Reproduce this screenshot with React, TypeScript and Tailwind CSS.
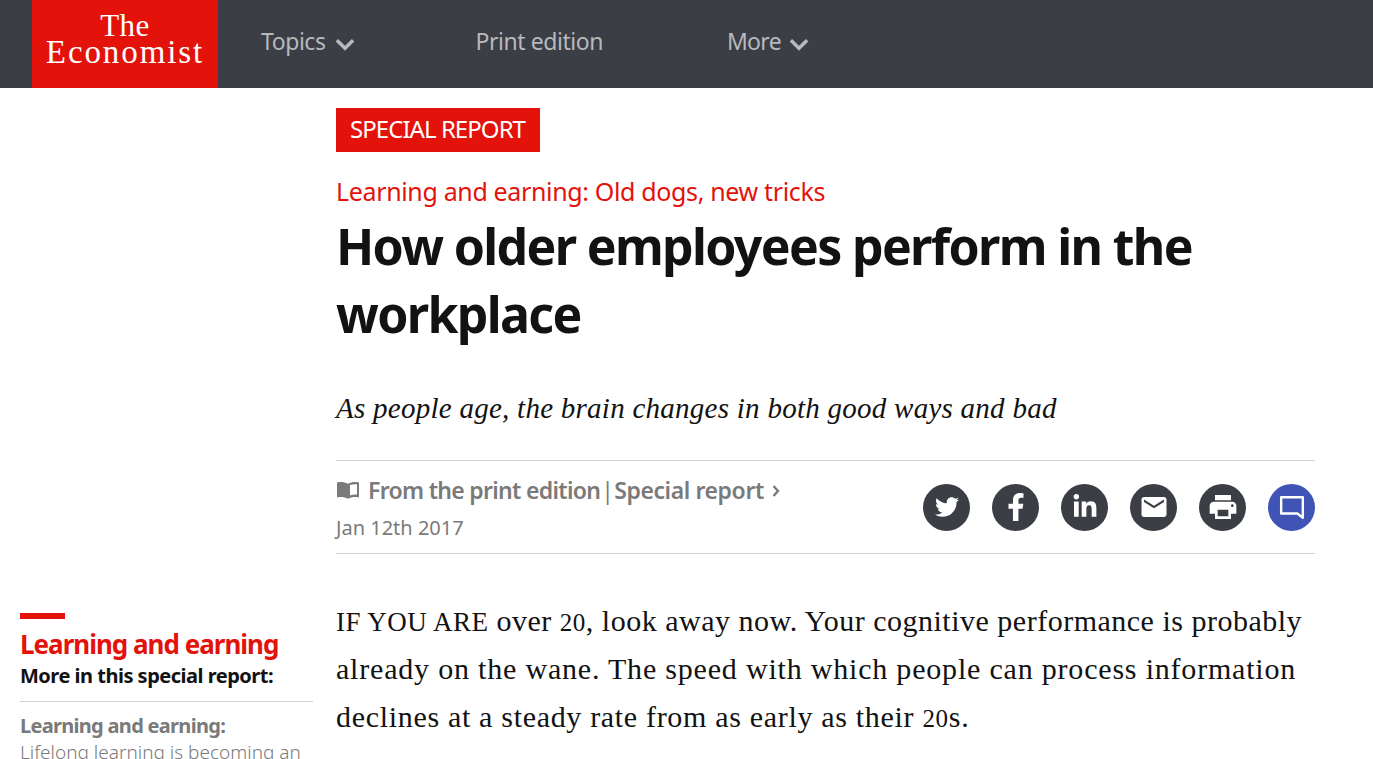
import { FaTwitter, FaFacebookF, FaLinkedinIn } from "react-icons/fa";
import { MdEmail, MdPrint } from "react-icons/md";

const sans = "font-['Noto_Sans',sans-serif]";

function Chevron({ className }: { className: string }) {
  return (
    <svg viewBox="0 0 18 12" className={className} fill="none" stroke="currentColor" strokeWidth="3.200">
      <path d="M1.500 2l7.500 7.500L16.500 2" />
    </svg>
  );
}

function ShareButton({ children, blue }: { children: React.ReactNode; blue?: boolean }) {
  return (
    <div
      className={
        blue
          ? "flex h-[47px] w-[47px] items-center justify-center rounded-full bg-[#3f54b4] text-white"
          : "flex h-[47px] w-[47px] items-center justify-center rounded-full bg-[#3b3e44] text-white"
      }
    >
      {children}
    </div>
  );
}

export default function App() {
  return (
    <div className="h-[759px] overflow-hidden bg-white">
      <header className={`flex h-[88px] bg-[#3b3e44] pl-[32px] text-[#b6b9bd] ${sans}`}>
        <div className="flex h-[88px] w-[186px] flex-col items-center bg-[#e3120b] pt-[12px] font-['Liberation_Serif',serif] text-white">
          <div className="text-[31px] leading-[27px] tracking-[0.5px]">The</div>
          <div className="text-[33px] leading-[27px] tracking-[1.9px]">Economist</div>
        </div>
        <nav className="flex items-center pb-[5px] text-[23px] tracking-[-0.45px]">
          <span className="ml-[43px]">Topics</span>
          <Chevron className="ml-[9px] mt-[5px] h-[13px] w-[20px]" />
          <span className="ml-[121px]">Print edition</span>
          <span className="ml-[124px] tracking-[-0.7px]">More</span>
          <Chevron className="ml-[8px] mt-[5px] h-[13px] w-[20px]" />
        </nav>
      </header>

      <main className="flex pl-[20px]">
        <aside className={`mt-[525px] w-[293px] shrink-0 ${sans}`}>
          <div className="h-[6px] w-[45px] bg-[#e3120b]" />
          <h2 className="mt-[6px] text-[26px] leading-[38px] font-bold tracking-[-1px] text-[#e3120b]">
            Learning and earning
          </h2>
          <p className="mt-[1px] text-[20px] leading-[23px] font-bold tracking-[-0.5px] text-[#121212]">
            More in this special report:
          </p>
          <div className="mt-[14px] border-t border-[#d0d0d0] pt-[11px]">
            <p className="text-[20px] leading-[26px] font-bold tracking-[-0.7px] text-[#7a7a7a]">
              Learning and earning:
            </p>
            <p className="text-[19px] leading-[26px] font-light tracking-[0px] text-[#7a7a7a]">
              Lifelong learning is becoming an
            </p>
          </div>
        </aside>

        <article className="ml-[23px] w-[979px] pt-[20px]">
          <div className={`inline-block h-[44px] bg-[#e3120b] pl-[14px] pr-[15px] text-[24px] leading-[42px] tracking-[-0.95px] text-white ${sans}`}>
            SPECIAL REPORT
          </div>
          <p className={`mt-[19px] text-[25px] leading-[40px] tracking-[-0.35px] text-[#e3120b] ${sans}`}>
            Learning and earning: Old dogs, new tricks
          </p>
          <h1 className={`mt-[1px] w-[900px] text-[50px] leading-[68px] font-bold tracking-[-1.65px] text-[#121212] ${sans}`}>
            How older employees perform in the workplace
          </h1>
          <p className="mt-[40px] font-['Liberation_Serif',serif] text-[29px] leading-[40px] tracking-[0.26px] text-[#121212] italic">
            As people age, the brain changes in both good ways and bad
          </p>

          <div className="mt-[32px] flex h-[94px] items-center justify-between border-y border-[#d0d0d0]">
            <div className={`pt-[1px] text-[#7a7a7a] ${sans}`}>
              <div className="flex items-center text-[23px] leading-[32px] font-semibold tracking-[-0.7px]">
                <svg viewBox="0 0 24 18" className="mr-[8px] h-[18px] w-[24px]" fill="currentColor">
                  <path d="M1 1.500c4-.8 7.500-.5 11 1.200v15c-3.500-1.700-7-2-11-1.200z" />
                  <path fillRule="evenodd" d="M12 2.700c3.500-1.700 7-2 11-1.200v15c-4-.8-7.500-.5-11 1.200zM14 4v10.500c2.500-.9 4.500-1.100 7-.9V3.300c-2.500-.2-4.500 0-7 .7z" />
                </svg>
                <span>From the print edition</span>
                <span className="mx-[1px] font-normal">|</span>
                <span className="tracking-[-0.4px]">Special report</span>
                <svg viewBox="0 0 8 12" className="ml-[8px] mt-[2px] h-[12px] w-[8px]" fill="none" stroke="currentColor" strokeWidth="2.400">
                  <path d="M1.500 1l4.500 5-4.500 5" />
                </svg>
              </div>
              <p className="mt-[8px] text-[20px] leading-[28px] tracking-[0px]">Jan 12th 2017</p>
            </div>
            <div className="flex gap-[22px]">
              <ShareButton>
                <FaTwitter className="h-[24px] w-[24px]" />
              </ShareButton>
              <ShareButton>
                <FaFacebookF className="h-[28px] w-[28px]" />
              </ShareButton>
              <ShareButton>
                <FaLinkedinIn className="h-[26px] w-[26px]" />
              </ShareButton>
              <ShareButton>
                <MdEmail className="h-[30px] w-[30px]" />
              </ShareButton>
              <ShareButton>
                <MdPrint className="h-[32px] w-[32px]" />
              </ShareButton>
              <ShareButton blue>
                <svg viewBox="0 0 24 24" className="h-[26px] w-[26px]" fill="none" stroke="currentColor" strokeWidth="2.200">
                  <path d="M2 3h20v19l-5-4H2z" strokeLinejoin="round" />
                </svg>
              </ShareButton>
            </div>
          </div>

          <div className="mt-[43px] w-[979px] font-['Liberation_Serif',serif] text-[30px] leading-[48px] whitespace-nowrap text-[#121212]">
            <p className="h-[48px] tracking-[0.5px]">
              <span className="text-[27px] leading-[0]">IF YOU ARE</span> over <span className="text-[25px] leading-[0]">20</span>, look away now. Your cognitive performance is probably
            </p>
            <p className="h-[48px] tracking-[0.8px]">
              already on the wane. The speed with which people can process information
            </p>
            <p className="h-[48px] tracking-[0.68px]">
              declines at a steady rate from as early as their <span className="text-[25px] leading-[0]">20</span>s.
            </p>
          </div>
        </article>
      </main>
    </div>
  );
}
